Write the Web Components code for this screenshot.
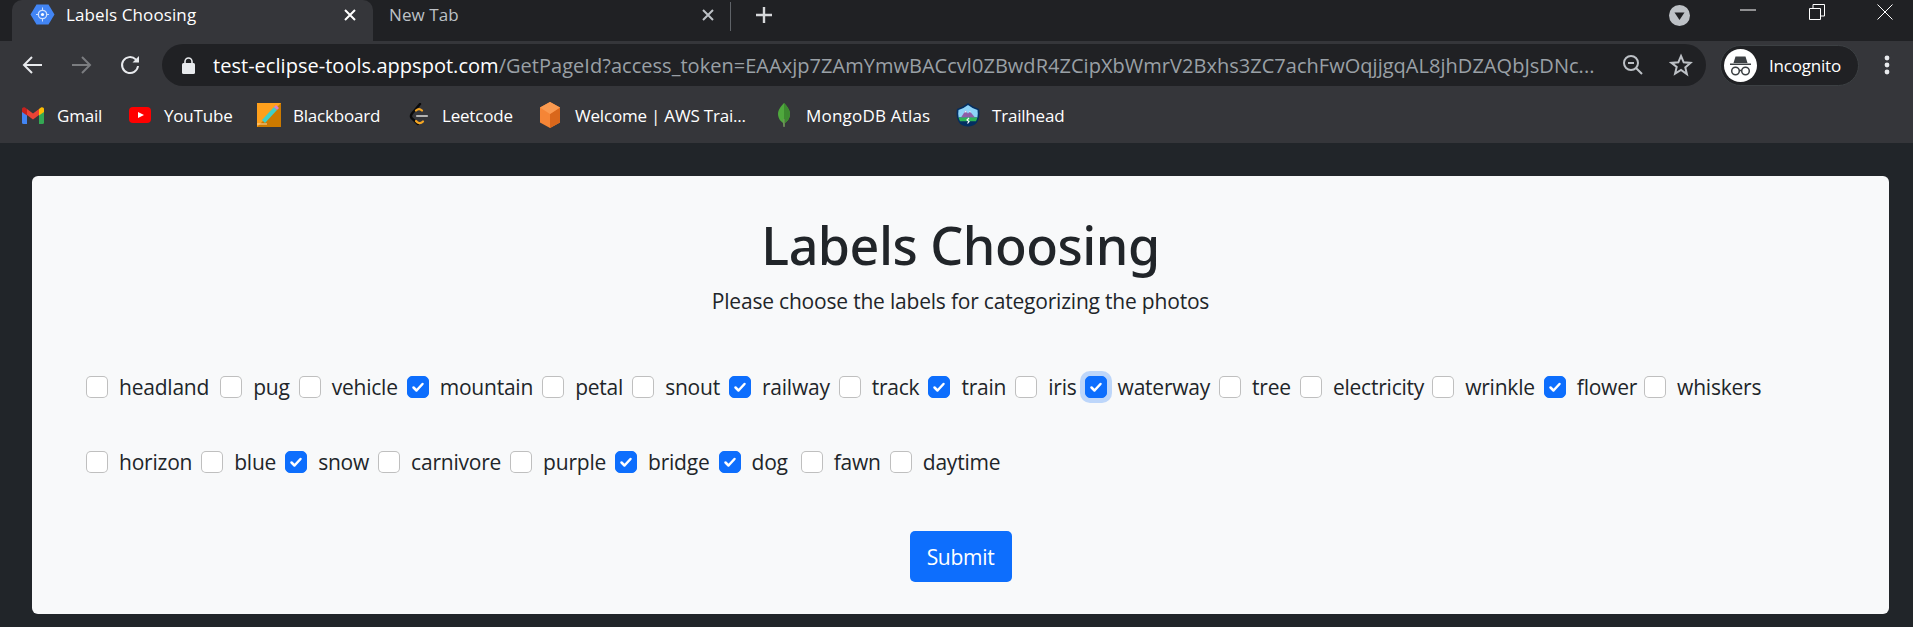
<!DOCTYPE html>
<html>
<head>
<meta charset="utf-8">
<title>Labels Choosing</title>
<style>
  html, body { margin: 0; height: 100%; background: #212529; overflow: hidden; }
  body { font-family: "Open Sans", "Noto Sans", sans-serif; }
</style>
</head>
<body>
<browser-tabs></browser-tabs>
<browser-toolbar></browser-toolbar>
<bookmark-bar>
  <bookmark-item label="Gmail" style="--w:46px"><svg viewBox="0 0 22 17" width="22" height="17"><path fill="#4285f4" d="M0 3v12.500a1.500 1.500 0 0 0 1.500 1.500H5V8z"/><path fill="#34a853" d="M17 8v9h3.500a1.500 1.500 0 0 0 1.500-1.500V3z"/><path fill="#ea4335" d="M5 8V2l6 4.500L17 2v6l-6 4.500z"/><path fill="#c5221f" d="M0 3v2l5 3.500V2L3 .5C1.700-.4 0 .5 0 2z"/><path fill="#fbbc04" d="M22 3v2l-5 3.500V2l2-1.500C20.300-.4 22 .5 22 2z"/></svg></bookmark-item>
  <bookmark-item label="YouTube" style="--w:68px;--ml:26px"><svg viewBox="0 0 22 16" width="22" height="16"><rect width="22" height="16" rx="4" fill="#f00"/><path fill="#fff" d="M9 5l6 3-6 3z"/></svg></bookmark-item>
  <bookmark-item label="Blackboard" style="--w:87px;--ml:25px;--gap:12px"><svg viewBox="0 0 24 24" width="24" height="24"><rect width="24" height="24" fill="#cc7a00"/><path fill="#ffa01c" d="M0 0h24L0 24z"/><path fill="#3fd0c9" d="M5 17L17 4l3 3L8 20z"/><path fill="#d77fd0" d="M17 4l2-2 3 3-2 2z"/><path stroke="#ffd9a0" d="M0 21h10" fill="none"/></svg></bookmark-item>
  <bookmark-item label="Leetcode" style="--w:71px;--ml:29px"><svg viewBox="0 0 20 24" width="20" height="24" fill="none"><path d="M11 1L3 10.500c-1.500 2-1.500 3.500 0 5L9 21" stroke="#0a0a0a" stroke-width="2.400" stroke-linecap="round"/><path d="M7 7.500c2-1.800 4-1.800 6 0M7 18c2 2.500 4.500 3 7 .5" stroke="#f5a623" stroke-width="2.200" stroke-linecap="round"/><path d="M8 13h10" stroke="#b3b3b3" stroke-width="2.200" stroke-linecap="round"/></svg></bookmark-item>
  <bookmark-item label="Welcome | AWS Trai..." style="--w:172px;--ml:25px"><svg viewBox="0 0 24 26" width="24" height="26"><path fill="#f58536" d="M12 0l10 5.500v15L12 26 2 20.500v-15z"/><path fill="#d9671b" d="M12 12l10-6.500v15L12 26z"/><path fill="#fa9a50" d="M2 5.500L12 0l10 5.500L12 12z"/></svg></bookmark-item>
  <bookmark-item label="MongoDB Atlas" style="--w:124px;--ml:31px;--gap:16px;--ls:.2px"><svg viewBox="0 0 12 24" width="12" height="24"><path fill="#4fa83d" d="M6 0c3 3.500 6 6.500 6 11 0 4.500-3 7.500-5 9l-.5 3.500h-1L5 20c-2-1.500-5-4.500-5-9C0 6.500 3 3.500 6 0z"/><path fill="#3d8a30" d="M6 0c3 3.500 6 6.500 6 11 0 4.500-3 7.500-5 9l-.5 3.500H6z"/><path fill="#8a8a70" d="M5.600 16h.8l.1 8h-1z"/></svg></bookmark-item>
  <bookmark-item label="Trailhead" style="--w:105px;--ml:26px;--gap:12px"><svg viewBox="0 0 24 24" width="24" height="24"><path fill="#032e61" d="M12 0C15 2.500 19 4.500 23 6c1.200 7-.5 14.500-6 16.500-3.500 1.300-6.500 1.300-10 0C1.500 20.500-.2 13 1 6c4-1.500 8-3.500 11-6z"/><path fill="#8ed3f7" d="M12 2c3 2.300 6 3.800 9.500 5 .4 2.500.4 5-.1 7.500H2.600c-.5-2.500-.5-5-.1-7.500C6 5.800 9 4.300 12 2z"/><path fill="#8e5ea8" d="M5 14.500l4.500-7 2.500 3 2-2 5 6z"/><path fill="#e8f4fb" d="M8.200 9.500l1.300-2 1.500 1.800zM13 9l1-1 1.200 1.400z"/><path fill="#2fb457" d="M2.600 14.500h18.800c-.3 1.500-.8 2.700-1.500 3.800H4.100c-.7-1.100-1.200-2.300-1.500-3.800z"/><path stroke="#fff" fill="none" stroke-width="1.200" d="M13 15l-2 2 2 1.500-1.500 2"/></svg></bookmark-item>
</bookmark-bar>
<labels-card>
  <label-check style="margin-right:11px">headland</label-check>
  <label-check>pug</label-check>
  <label-check>vehicle</label-check>
  <label-check checked>mountain</label-check>
  <label-check>petal</label-check>
  <label-check>snout</label-check>
  <label-check checked>railway</label-check>
  <label-check>track</label-check>
  <label-check checked>train</label-check>
  <label-check style="margin-right:8px">iris</label-check>
  <label-check checked focused>waterway</label-check>
  <label-check>tree</label-check>
  <label-check style="margin-right:8px">electricity</label-check>
  <label-check>wrinkle</label-check>
  <label-check checked style="margin-right:7px">flower</label-check>
  <label-check>whiskers</label-check>
  <label-check>horizon</label-check>
  <label-check>blue</label-check>
  <label-check checked>snow</label-check>
  <label-check>carnivore</label-check>
  <label-check>purple</label-check>
  <label-check checked>bridge</label-check>
  <label-check checked style="margin-right:13px">dog</label-check>
  <label-check>fawn</label-check>
  <label-check>daytime</label-check>
</labels-card>

<script>
class BrowserTabs extends HTMLElement {
  constructor() {
    super()
    this.attachShadow({ mode: "open" })
    this.shadowRoot.innerHTML = `
      <style>
        :host { display: flex; height: 41px; background: #202124; color: #fff; font-size: 17px; letter-spacing: .1px; position: relative; }
        .tab { display: flex; align-items: center; height: 41px; box-sizing: border-box; }
        .active { width: 361px; margin-left: 12px; background: #35363a; border-radius: 10px 10px 0 0; padding-left: 18px; padding-bottom: 12px; }
        .other { width: 357px; padding-left: 16px; color: #bdc1c6; padding-bottom: 12px; }
        .title { margin-left: 11px; flex: 1; }
        .x { margin-right: 17px; }
        .other .x { margin-right: 16px; }
        .sep { width: 1px; height: 29px; margin-top: 2px; background: #5f6368; }
        .plus { margin: 5px 0 0 23px; height: 20px; }
        .right { margin-left: auto; display: flex; }
        .drop { margin: 5px 0 0 0; }
      </style>
      <div class="tab active">
        <svg width="25" height="21" viewBox="0 0 25 21"><path fill="#4285f4" d="M6.500 0.500h12L24.500 10.500l-6 10h-12L.5 10.500z"/><circle cx="12.500" cy="10.500" r="4.200" fill="none" stroke="#cfe0fc" stroke-width="1.300"/><circle cx="12.500" cy="10.500" r="1.600" fill="#fff"/><path stroke="#cfe0fc" d="M12.500 3.500v2.500M12.500 15v2.500M6 10.500h2M17 10.500h2"/></svg>
        <span class="title">Labels Choosing</span>
        <svg class="x" width="12" height="12" viewBox="0 0 12 12"><path d="M1 1l10 10M11 1L1 11" stroke="#fff" stroke-width="2"/></svg>
      </div>
      <div class="tab other">
        <span class="title" style="margin-left:0">New Tab</span>
        <svg class="x" width="12" height="12" viewBox="0 0 12 12"><path d="M1 1l10 10M11 1L1 11" stroke="#bdc1c6" stroke-width="2"/></svg>
      </div>
      <div class="sep"></div>
      <svg class="plus" width="20" height="20" viewBox="0 0 20 20"><path d="M10 2v16M2 10h16" stroke="#d6d8da" stroke-width="2.400"/></svg>
      <div class="right">
        <svg class="drop" width="21" height="21" viewBox="0 0 21 21"><circle cx="10.500" cy="10.500" r="10.500" fill="#bdc1c6"/><path d="M5.500 7.500h10l-5 7.500z" fill="#202124"/></svg>
        <svg style="margin:9px 0 0 50px" width="16" height="2" viewBox="0 0 16 2"><path d="M0 1h16" stroke="#fff"/></svg>
        <svg style="margin:4px 0 0 53px" width="16" height="16" viewBox="0 0 16 16" fill="none" stroke="#fff"><path d="M.5 4.500h11v11H.5zM4 4V.5h11.500V12H12"/></svg>
        <svg style="margin:4px 20px 0 52px" width="16" height="16" viewBox="0 0 16 16" fill="none" stroke="#fff"><path d="M.5.500l15 15M15.500.500l-15 15"/></svg>
      </div>
    `
  }
}

class BrowserToolbar extends HTMLElement {
  constructor() {
    super()
    this.attachShadow({ mode: "open" })
    this.shadowRoot.innerHTML = `
      <style>
        :host { display: flex; align-items: center; height: 55px; background: #35363a; box-sizing: border-box; padding-bottom: 7px; }
        .nav { display: flex; align-items: center; margin-left: 22px; width: 140px; }
        .omni { width: 1544px; height: 42px; border-radius: 21px; background: #202124; display: flex; align-items: center; box-sizing: border-box; padding-left: 20px; font-size: 20px; letter-spacing: .03px; }
        .url { margin-left: 18px; width: 1386px; white-space: nowrap; overflow: hidden; color: #9aa0a6; }
        .url b { font-weight: 400; color: #fff; }
        .pill { margin-left: 14px; width: 139px; height: 41px; border-radius: 21px; background: #202124; border: 1px solid #3c4043; box-sizing: border-box; display: flex; align-items: center; padding-left: 3px; color: #fff; font-size: 17px; letter-spacing: -.2px; }
        .pill span { margin-left: 12px; }
        .dots { margin-left: 25px; }
      </style>
      <div class="nav">
        <svg width="22" height="22" viewBox="0 0 22 22" fill="none" stroke="#e8eaed" stroke-width="2"><path d="M20 11H2M10 3l-8 8 8 8"/></svg>
        <svg style="margin-left:26px" width="22" height="22" viewBox="0 0 22 22" fill="none" stroke="#7b7d80" stroke-width="2"><path d="M2 11h18M12 3l8 8-8 8"/></svg>
        <svg style="margin-left:27px" width="22" height="22" viewBox="0 0 22 22" fill="none" stroke="#e8eaed" stroke-width="2"><path d="M19 12a8 8 0 1 1-2.300-6.600L19 7.500"/><path d="M20 2v6.500h-6.500" fill="#e8eaed" stroke="none"/></svg>
      </div>
      <div class="omni">
        <svg width="13" height="17" viewBox="0 0 13 17"><rect y="6" width="13" height="11" rx="1.500" fill="#e8eaed"/><path d="M3 7V4.500a3.500 3.500 0 0 1 7 0V7" fill="none" stroke="#e8eaed" stroke-width="1.600"/></svg>
        <div class="url"><b>test-eclipse-tools.appspot.com</b>/GetPageId?access_token=EAAxjp7ZAmYmwBACcvl0ZBwdR4ZCipXbWmrV2Bxhs3ZC7achFwOqjjgqAL8jhDZAQbJsDNc...</div>
        <svg style="margin-left:23px" width="22" height="22" viewBox="0 0 22 22" fill="none" stroke="#bdc1c6" stroke-width="2"><circle cx="9" cy="9" r="7"/><path d="M14 14l6 6M6 9h6"/></svg>
        <svg style="margin-left:25px" width="24" height="24" viewBox="0 0 24 24" fill="none" stroke="#bdc1c6" stroke-width="2"><path d="M12 3l2.700 6.300 6.800.6-5.200 4.500 1.600 6.700L12 17l-5.900 3.600 1.600-6.700L2.500 9.900l6.800-.6z"/></svg>
      </div>
      <div class="pill">
        <svg width="33" height="33" viewBox="0 0 33 33"><circle cx="16.500" cy="16.500" r="16.500" fill="#fff"/><path fill="#3c4043" d="M11.500 7.500h10l2 6.500h-14zM6 14.500h21v1.500H6z"/><g fill="none" stroke="#3c4043" stroke-width="1.500"><circle cx="11.500" cy="22" r="3.800"/><circle cx="21.500" cy="22" r="3.800"/><path d="M15 21.500h3"/></g></svg>
        <span>Incognito</span>
      </div>
      <svg class="dots" width="6" height="22" viewBox="0 0 6 22" fill="#e8eaed"><circle cx="3" cy="4" r="2.400"/><circle cx="3" cy="11" r="2.400"/><circle cx="3" cy="18" r="2.400"/></svg>
    `
  }
}

class BookmarkBar extends HTMLElement {
  constructor() {
    super()
    this.attachShadow({ mode: "open" })
    this.shadowRoot.innerHTML = `
      <style>
        :host { display: flex; align-items: center; height: 47px; background: #35363a; box-sizing: border-box; padding: 0 0 9px 22px; }
      </style>
      <slot></slot>
    `
  }
}

class BookmarkItem extends HTMLElement {
  constructor() {
    super()
    this.attachShadow({ mode: "open" })
    this.shadowRoot.innerHTML = `
      <style>
        :host { display: flex; align-items: center; margin-left: var(--ml, 0); color: #fff; font-size: 17px; letter-spacing: var(--ls, -.2px); }
        .icon { display: flex; }
        .text { margin-left: var(--gap, 13px); width: var(--w); white-space: nowrap; }
      </style>
      <span class="icon"><slot></slot></span><span class="text">${this.getAttribute("label")}</span>
    `
  }
}

class LabelsCard extends HTMLElement {
  constructor() {
    super()
    this.attachShadow({ mode: "open" })
    this.shadowRoot.innerHTML = `
      <style>
        :host { display: block; margin: 33px 24px 0 32px; height: 438px; box-sizing: border-box; background: #f8f9fa; border-radius: 6px; color: #212529; padding-top: 28px; }
        h1 { margin: 0; text-align: center; font-family: "Noto Sans", "Open Sans", sans-serif; font-size: 52px; font-weight: 500; line-height: 82px; letter-spacing: -.5px; }
        p { margin: 0; text-align: center; font-size: 21px; line-height: 30px; letter-spacing: -.2px; }
        .labels { display: flex; flex-wrap: wrap; align-items: center; padding: 0 54px; margin-top: 52px; row-gap: 37px; height: 113px; align-content: flex-start; }
        .actions { display: flex; justify-content: center; margin-top: 50px; }
        button { width: 102px; height: 51px; border: 0; border-radius: 5px; background: #0d6efd; color: #fff; font: inherit; font-size: 21px; letter-spacing: -.3px; padding: 0; }
      </style>
      <h1>Labels Choosing</h1>
      <p>Please choose the labels for categorizing the photos</p>
      <div class="labels"><slot></slot></div>
      <div class="actions"><button type="button">Submit</button></div>
    `
  }
}

class LabelCheck extends HTMLElement {
  constructor() {
    super()
    this.attachShadow({ mode: "open" })
    const checked = this.hasAttribute("checked")
    const focused = this.hasAttribute("focused")
    this.shadowRoot.innerHTML = `
      <style>
        :host { display: flex; align-items: center; height: 38px; margin-right: 9px; font-size: 21px; letter-spacing: -.22px; }
        .box { width: 22px; height: 22px; box-sizing: border-box; border-radius: 5px; background: #fff; border: 1px solid rgba(0,0,0,.25); display: flex; margin-right: 11px; flex: none; }
        .on { background: #0d6efd; border-color: #0d6efd; }
        .focus { box-shadow: 0 0 0 5px rgba(13,110,253,.25); }
      </style>
      <span class="box ${checked ? "on" : ""} ${focused ? "focus" : ""}">
        ${checked ? '<svg width="20" height="20" viewBox="0 0 20 20"><path d="M5.500 10.500l3 3 6-6.500" fill="none" stroke="#fff" stroke-width="2.500" stroke-linecap="round" stroke-linejoin="round"/></svg>' : ""}
      </span>
      <slot></slot>
    `
  }
}

customElements.define("browser-tabs", BrowserTabs)
customElements.define("browser-toolbar", BrowserToolbar)
customElements.define("bookmark-bar", BookmarkBar)
customElements.define("bookmark-item", BookmarkItem)
customElements.define("labels-card", LabelsCard)
customElements.define("label-check", LabelCheck)
</script>
</body>
</html>
